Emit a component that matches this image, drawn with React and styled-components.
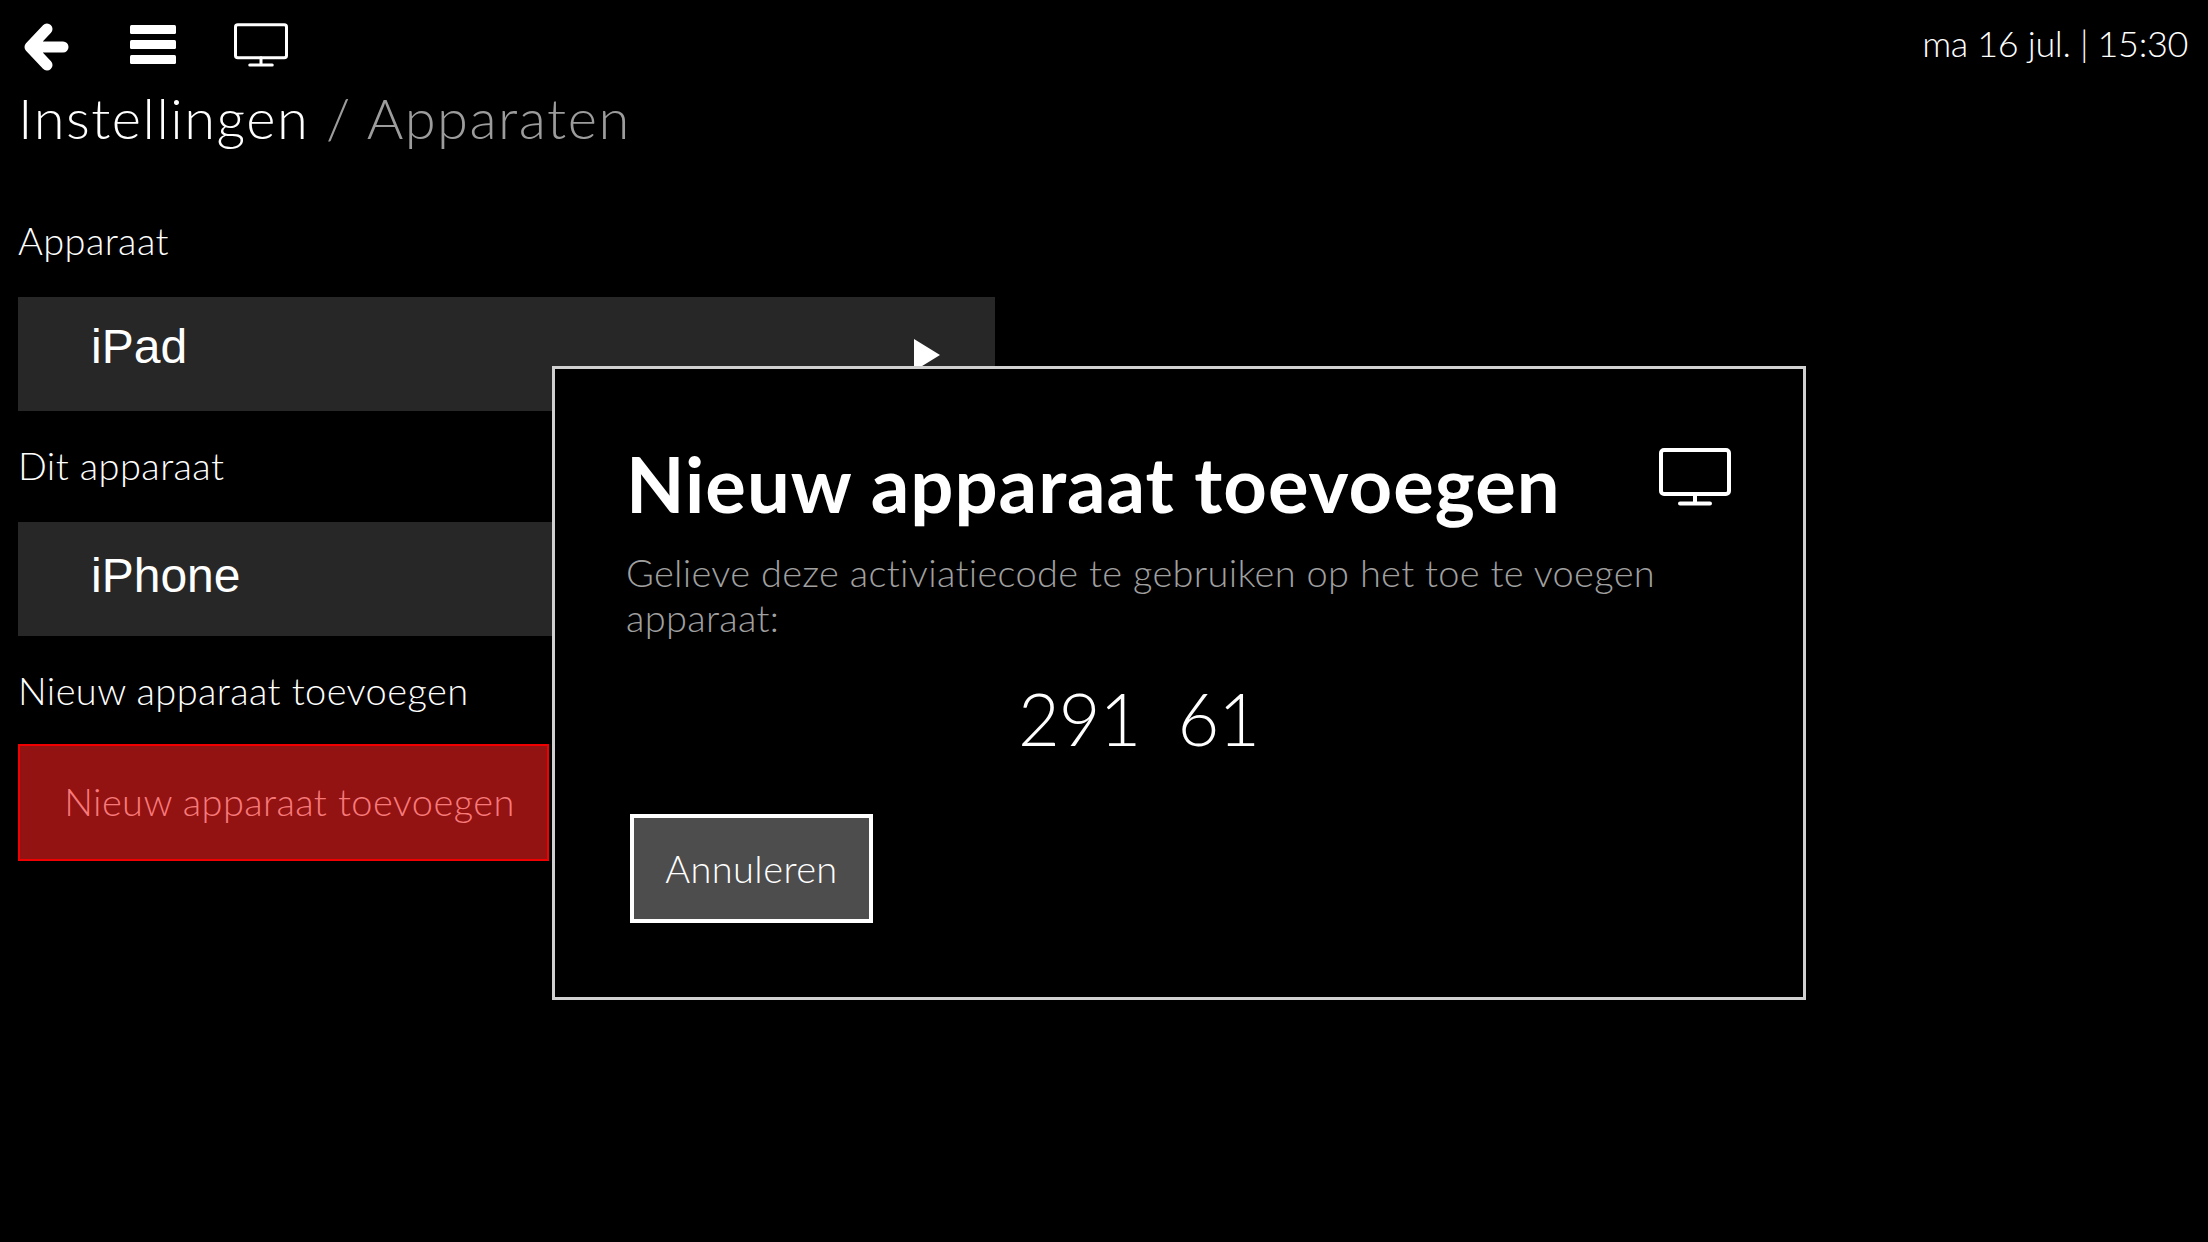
import React from "react";
import styled, { createGlobalStyle } from "styled-components";

const GlobalStyle = createGlobalStyle`
  html, body {
    margin: 0;
    background: #000;
  }
  body {
    font-family: "Lato", "Open Sans", sans-serif;
    font-weight: 300;
    color: #fff;
  }
`;

const Page = styled.div`
  position: relative;
  width: 2208px;
  height: 1242px;
  overflow: hidden;
  background: #000;
`;

const TopBar = styled.header`
  display: flex;
  align-items: flex-start;
  justify-content: space-between;
  height: 90px;
  padding: 23px 20px 0 24px;
  box-sizing: border-box;
`;

const IconRow = styled.div`
  display: flex;
  gap: 58px;
`;

const Clock = styled.div`
  font-size: 36px;
  line-height: 41px;
  letter-spacing: -0.35px;
`;

const Content = styled.main`
  padding: 0 18px;
`;

const Title = styled.h1`
  margin: 0 0 71px;
  font-size: 56px;
  line-height: 56px;
  font-weight: 300;
  letter-spacing: 1.5px;
`;

const Crumb = styled.span`
  color: #9c9c9c;
`;

const Label = styled.div`
  margin: 31px 0 34px;
  font-size: 38px;
  line-height: 46px;
  letter-spacing: 0.4px;
  &:first-of-type {
    margin-top: 0;
  }
`;

const Select = styled.div`
  position: relative;
  display: flex;
  align-items: center;
  justify-content: space-between;
  width: 977px;
  height: 114px;
  padding: 0 55px ${(p) => p.$lift}px 73px;
  box-sizing: border-box;
  background: #272727;
  font-family: "Liberation Sans", Arial, sans-serif;
  font-weight: 400;
  font-size: 48px;
`;

const Caret = styled.span`
  width: 0;
  height: 0;
  margin-top: 17px;
  border-left: 26px solid #fff;
  border-top: 16px solid transparent;
  border-bottom: 16px solid transparent;
`;

const AddButton = styled.button`
  display: block;
  width: 531px;
  height: 117px;
  margin-top: -3px;
  padding: 0 0 3px 12px;
  border: 2px solid #f00000;
  background: #931212;
  color: #f77a7a;
  font: inherit;
  font-size: 38px;
  letter-spacing: 0.4px;
`;

const Modal = styled.section`
  position: absolute;
  left: 552px;
  top: 366px;
  width: 1254px;
  height: 634px;
  padding: 75px 72px 0 71px;
  box-sizing: border-box;
  border: 3px solid #d0d0d0;
  background: #000;
`;

const ModalHead = styled.div`
  display: flex;
  align-items: flex-start;
  justify-content: space-between;
  height: 84px;
`;

const ModalTitle = styled.h2`
  margin: 0;
  font-size: 76px;
  line-height: 80px;
  font-weight: 700;
  letter-spacing: 1px;
`;

const MonitorSlot = styled.div`
  margin-top: 4px;
`;

const ModalText = styled.p`
  margin: 22px 0 0;
  color: #a0a0a0;
  font-size: 38px;
  line-height: 45px;
  letter-spacing: 0.3px;
`;

const Code = styled.div`
  margin-top: 34px;
  padding-left: 392px;
  font-size: 72px;
  line-height: 88px;
  letter-spacing: -1px;
  white-space: pre;
`;

const CancelButton = styled.button`
  display: block;
  width: 243px;
  height: 109px;
  margin: 52px 0 0 4px;
  padding: 0 0 2px;
  border: 4px solid #fff;
  background: #4d4d4d;
  color: #fff;
  font: inherit;
  font-size: 38px;
  letter-spacing: 0.4px;
`;

const Svg = styled.svg`
  display: block;
  fill: none;
  stroke: #fff;
  stroke-linecap: round;
  stroke-linejoin: round;
`;

const BackIcon = () => (
  <Svg width="48" height="48" viewBox="0 0 48 48" strokeWidth="11">
    <path d="M23 6 L6 24 L23 42 M8 24 H39" />
  </Svg>
);

const MenuIcon = () => (
  <Svg width="46" height="42" viewBox="0 0 46 42" strokeWidth="0">
    <rect x="0" y="2" width="46" height="9" rx="1.5" fill="#fff" />
    <rect x="0" y="17" width="46" height="9" rx="1.5" fill="#fff" />
    <rect x="0" y="32" width="46" height="9" rx="1.5" fill="#fff" />
  </Svg>
);

const MonitorIcon = ({ width, height }) => (
  <Svg width={width} height={height} viewBox="0 0 72 58" strokeWidth="4">
    <rect x="2" y="2" width="68" height="44" rx="3" />
    <path d="M36 46 V54 M21 55.5 H51" />
  </Svg>
);

export default function App() {
  return (
    <Page>
      <GlobalStyle />
      <TopBar>
        <IconRow>
          <BackIcon />
          <MenuIcon />
          <MonitorIcon width={54} height={44} />
        </IconRow>
        <Clock>ma 16 jul. | 15:30</Clock>
      </TopBar>
      <Content>
        <Title>
          Instellingen <Crumb>/ Apparaten</Crumb>
        </Title>
        <Label>Apparaat</Label>
        <Select $lift={15}>
          iPad
          <Caret />
        </Select>
        <Label>Dit apparaat</Label>
        <Select $lift={8}>iPhone</Select>
        <Label>Nieuw apparaat toevoegen</Label>
        <AddButton>Nieuw apparaat toevoegen</AddButton>
      </Content>
      <Modal>
        <ModalHead>
          <ModalTitle>Nieuw apparaat toevoegen</ModalTitle>
          <MonitorSlot>
            <MonitorIcon width={72} height={58} />
          </MonitorSlot>
        </ModalHead>
        <ModalText>
          Gelieve deze activiatiecode te gebruiken op het toe te voegen apparaat:
        </ModalText>
        <Code>291  61</Code>
        <CancelButton>Annuleren</CancelButton>
      </Modal>
    </Page>
  );
}
